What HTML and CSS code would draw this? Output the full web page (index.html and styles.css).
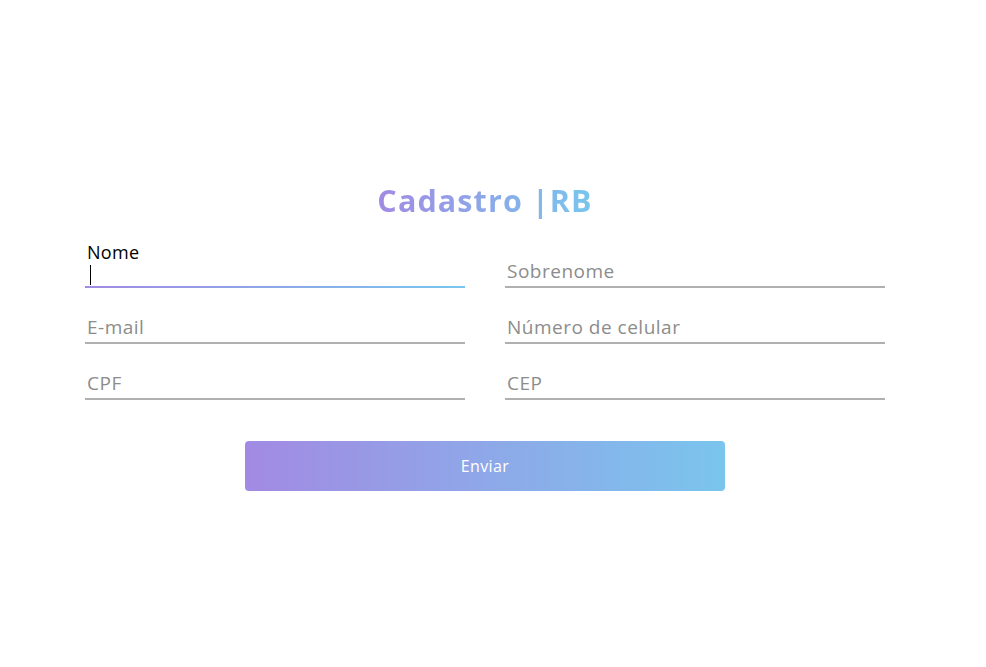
FILE: index.html
```html
<!DOCTYPE html>
<html lang="pt-BR">
<head>
<meta charset="utf-8">
<title>Cadastro RB</title>
<link rel="stylesheet" href="styles.css">
</head>
<body>
<main class="page">
  <h1 class="title"><span class="title-text">Cadastro |RB</span></h1>
  <form class="form">
    <div class="grid">
      <div class="field field-active">
        <label class="float-label" for="nome">Nome</label>
        <input class="input" id="nome" type="text">
        <span class="caret"></span>
      </div>
      <div class="field">
        <input class="input" type="text" placeholder="Sobrenome">
      </div>
      <div class="field">
        <input class="input" type="email" placeholder="E-mail">
      </div>
      <div class="field">
        <input class="input" type="text" placeholder="Número de celular">
      </div>
      <div class="field">
        <input class="input" type="text" placeholder="CPF">
      </div>
      <div class="field">
        <input class="input" type="text" placeholder="CEP">
      </div>
    </div>
    <button class="submit" type="button">Enviar</button>
  </form>
</main>
</body>
</html>
```
FILE: styles.css
```css
* { box-sizing: border-box; }
html, body { margin: 0; padding: 0; background: #ffffff; }
body {
  font-family: "Open Sans", "Noto Sans", sans-serif;
  color: #000;
}
.page {
  width: 800px;
  margin-left: 85px;
  padding-top: 179px;
}
.title {
  margin: 0;
  text-align: center;
  font-size: 30.5px;
  letter-spacing: 1.1px;
  line-height: 42px;
  font-weight: 700;
}
.title-text {
  background: linear-gradient(90deg, #a18ae3 0%, #78c6ee 100%);
  -webkit-background-clip: text;
  background-clip: text;
  color: transparent;
}
.form { margin-top: 37px; }
.grid {
  display: grid;
  grid-template-columns: 380px 380px;
  column-gap: 40px;
  row-gap: 26px;
}
.field {
  position: relative;
  height: 30px;
  border-bottom: 2px solid #b0b0b0;
}
.field-active {
  border-bottom: 2px solid;
  border-image: linear-gradient(90deg, #a18ae3, #78c6ee) 1;
}
.input {
  display: block;
  width: 100%;
  height: 26px;
  border: 0;
  outline: 0;
  padding: 0 2px;
  background: transparent;
  font-family: inherit;
  font-size: 19px;
  letter-spacing: 0.5px;
  color: #333;
}
.input::placeholder { color: #8c8c8c; }
.float-label {
  position: absolute;
  left: 2px;
  top: -16px;
  font-size: 18px;
  letter-spacing: 0.3px;
  color: #000;
  line-height: 20px;
}
.caret {
  position: absolute;
  left: 5px;
  top: 7px;
  width: 1px;
  height: 20px;
  background: #000;
}
.submit {
  display: block;
  width: 480px;
  height: 50px;
  margin: 41px auto 0;
  border: 0;
  border-radius: 4px;
  background: linear-gradient(90deg, #a28ae3 0%, #7ac5ed 100%);
  color: #fff;
  font-family: inherit;
  font-size: 16px;
  letter-spacing: 0.4px;
  font-weight: 500;
  cursor: pointer;
}
```
